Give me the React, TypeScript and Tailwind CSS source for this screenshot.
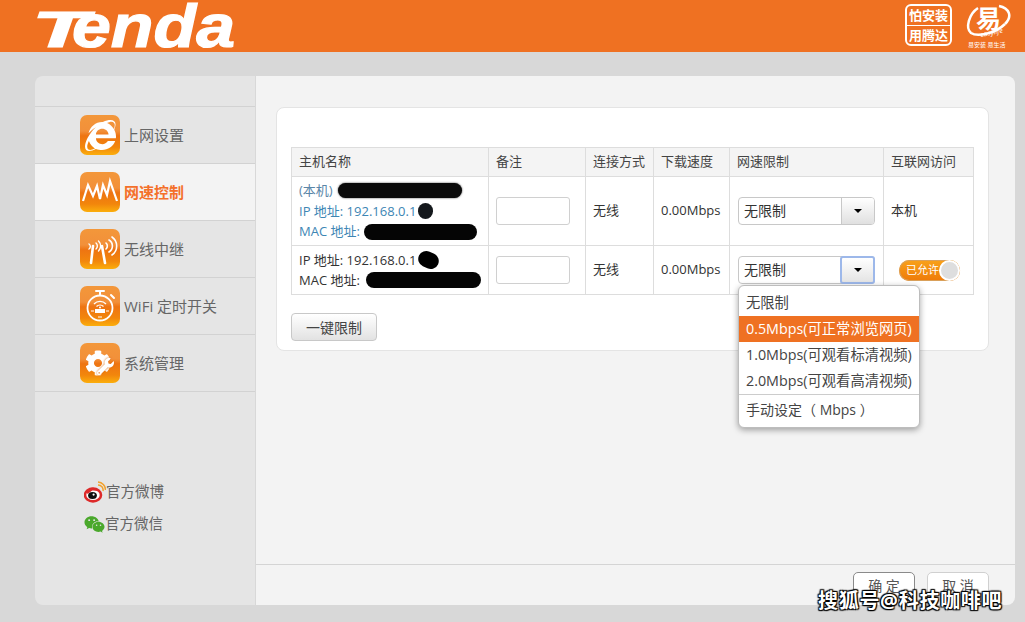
import type { ReactNode } from "react";
import { FaInternetExplorer, FaCog, FaWrench, FaWeixin } from "react-icons/fa";

const font = { fontFamily: '"Open Sans", "Noto Sans CJK SC", sans-serif' };

const tile =
  "relative flex h-10 w-10 shrink-0 items-center justify-center overflow-hidden rounded-[7px] bg-[linear-gradient(180deg,#f3973a_0%,#f2903a_40%,#ee7412_52%,#f2860c_80%,#fbae0c_100%)] text-white";

const SpeedIcon = () => (
  <svg viewBox="0 0 40 40" className="h-10 w-10" fill="none" stroke="#fff" strokeWidth="2.2" strokeLinejoin="miter">
    <path d="M3 29 L8 13 L13 24 L17 14 L20 27 L23 13 L27 23 L30 9 L37 29" />
  </svg>
);

const RepeaterIcon = () => (
  <svg viewBox="0 0 40 40" className="h-10 w-10" fill="none" stroke="#fff" strokeLinecap="round">
    <path d="M11 34 L13 17" strokeWidth="2.6" />
    <path d="M25 34 L22 17" strokeWidth="2.6" />
    <path d="M9 15 A3 3 0 0 1 9 20 M16 14 A4 4 0 0 1 16 20 M18.5 12 A7 7 0 0 1 18.5 22" strokeWidth="1.4" />
    <path d="M26 14 A4 4 0 0 1 26 20 M29 11 A7 7 0 0 1 29 23 M32 8 A11 11 0 0 1 32 26" strokeWidth="1.6" />
  </svg>
);

const TimerIcon = () => (
  <svg viewBox="0 0 40 40" className="h-10 w-10" fill="none" stroke="#fff">
    <circle cx="20" cy="22" r="12.5" strokeWidth="1.8" />
    <path d="M16 5 H24 M20 5 V9 M31 9 L34 12" strokeWidth="2" strokeLinecap="round" />
    <path d="M14 18 A8 8 0 0 1 26 18 M16.5 20.5 A5 5 0 0 1 23.5 20.5" strokeWidth="1.3" />
    <rect x="15" y="23" width="10" height="4" fill="#fff" stroke="none" />
    <circle cx="20" cy="21.5" r="1" fill="#fff" stroke="none" />
    <path d="M11 25 H14 M26 25 H29 M18 31 H22" strokeWidth="1" />
  </svg>
);

const WeiboIcon = () => (
  <svg viewBox="0 0 22 22" className="h-[22px] w-[22px]" fill="none">
    <ellipse cx="9" cy="14" rx="8" ry="6.4" fill="#fff" stroke="#dd2a2a" strokeWidth="2.6" />
    <path d="M13 8.5 L8 8 L3 12" stroke="#dd2a2a" strokeWidth="2.4" />
    <ellipse cx="8.5" cy="14.5" rx="4.4" ry="3.6" fill="#111" />
    <circle cx="9.6" cy="13.6" r="1.1" fill="#fff" />
    <path d="M14 4 A5 5 0 0 1 19 10 M14 1 A8 8 0 0 1 21.5 9" stroke="#f2a12b" strokeWidth="1.5" />
  </svg>
);

const menu: { label: string; icon: ReactNode; active?: boolean }[] = [
  { label: "上网设置", icon: <FaInternetExplorer className="h-[31px] w-[31px]" /> },
  { label: "网速控制", icon: <SpeedIcon />, active: true },
  { label: "无线中继", icon: <RepeaterIcon /> },
  { label: "WiFi 定时开关", icon: <TimerIcon /> },
  {
    label: "系统管理",
    icon: (
      <span className="relative block h-10 w-10">
        <FaCog className="absolute left-[5px] top-[7px] h-[26px] w-[26px]" />
        <FaWrench className="absolute left-[17px] top-[15px] h-[17px] w-[17px] drop-shadow-[0_0_1px_#d9690c]" />
      </span>
    ),
  },
];

const Caret = () => <span className="h-0 w-0 border-x-[4px] border-t-[4px] border-x-transparent border-t-black" />;

const SpeedSelect = ({ focused }: { focused?: boolean }) => (
  <div className="ml-px flex h-7 w-[137px] rounded-[4px] border border-[#c8c8c8] bg-white text-[14px]">
    <span className="flex-1 pl-[5px] leading-[26px] text-[#333]">无限制</span>
    <span
      className={
        focused
          ? "-m-px flex w-[35px] items-center justify-center rounded-[3px] border-2 border-[#9db8ea] bg-[linear-gradient(180deg,#ffffff,#e4e4e4)]"
          : "flex w-[33px] items-center justify-center rounded-r-[3px] border-l border-[#c8c8c8] bg-[linear-gradient(180deg,#ffffff,#e0e0e0)]"
      }
    >
      <Caret />
    </span>
  </div>
);

const RemarkInput = () => <input className="block h-7 w-[74px] rounded-[3px] border border-[#d0d0d0] bg-white" />;

const th = "border border-[#dddddd] pl-[7px] text-left text-[13px] font-normal text-[#444]";
const td = "border border-[#dddddd] pl-[7px] text-[13px] text-[#333]";

const dropdownItem = "flex h-[26px] items-center pl-[7px] text-[14.3px] text-[#444]";

const App = () => (
  <div style={font} className="flex h-[622px] w-[1025px] flex-col overflow-hidden bg-[#d8d8d8]">
    {/* header */}
    <header className="flex h-[52px] shrink-0 items-start justify-between bg-[#ef7122]">
      <svg viewBox="0 0 240 52" className="ml-[30px] h-[52px] w-[240px]">
        <text
          x="2"
          y="47"
          fontFamily='"Liberation Sans", sans-serif'
          fontWeight="700"
          fontStyle="italic"
          fontSize="50"
          fill="#fff"
          stroke="#fff"
          strokeWidth="1.2"
          textLength="56"
          lengthAdjust="spacingAndGlyphs"
        >
          T
        </text>
        <text
          x="42"
          y="47"
          fontFamily='"Liberation Sans", sans-serif'
          fontWeight="700"
          fontStyle="italic"
          fontSize="61"
          fill="#fff"
          stroke="#fff"
          strokeWidth="1.2"
          textLength="163"
          lengthAdjust="spacingAndGlyphs"
        >
          enda
        </text>
      </svg>
      <div className="mr-[13px] mt-1 flex items-start gap-[13px]">
        <div className="flex h-[42px] w-[47px] flex-col items-center rounded-[6px] border-2 border-white text-[13px] font-bold leading-[19px] text-white">
          <span>怕安装</span>
          <span className="w-full border-t border-white text-center">用腾达</span>
        </div>
        <div className="relative h-[44px] w-[47px] text-white">
          <svg viewBox="0 0 47 34" className="absolute left-0 top-0 h-[34px] w-[47px]" fill="none" stroke="#fff" strokeWidth="2.5">
            <path d="M13 4 C4 10 0 24 6 29 C12 33 30 30 40 20" />
            <path d="M34 2 C44 4 48 12 40 20" />
          </svg>
          <span className="absolute left-[11px] top-[1px] text-[25px] font-bold leading-[26px]">易</span>
          <span className="absolute left-[15px] top-[25px] -rotate-12 text-[7px] italic leading-[8px]">easylife</span>
          <span className="absolute left-[3px] top-[37px] whitespace-nowrap text-[6px] leading-[8px]">易安装 易生活</span>
        </div>
      </div>
    </header>

    <div className="flex min-h-0 flex-1 pb-[17px] pl-[35px] pr-[10px] pt-6">
      {/* sidebar */}
      <aside className="flex w-[220px] shrink-0 flex-col rounded-l-[8px] bg-[#e5e5e5]">
        <div className="h-[31px] border-b border-[#d2d2d2]" />
        {menu.map((m) => (
          <div
            key={m.label}
            className={`flex h-[57px] items-center gap-1 border-b border-[#d2d2d2] pl-[45px] text-[15px] ${
              m.active ? "bg-[#f3f3f3] font-bold text-[#f4702a]" : "text-[#666]"
            }`}
          >
            <span className={tile}>{m.icon}</span>
            {m.label}
          </div>
        ))}
        <div className="mt-[89px] flex flex-col gap-[10px] pl-[49px] text-[14.5px] text-[#666]">
          <div className="flex h-[22px] items-center">
            <WeiboIcon />
            官方微博
          </div>
          <div className="flex h-[22px] items-center">
            <FaWeixin className="h-[21px] w-[21px] text-[#4aa82c]" />
            官方微信
          </div>
        </div>
      </aside>

      {/* content */}
      <main className="ml-px flex min-w-0 flex-1 flex-col rounded-r-[8px] bg-[#f3f3f3]">
        <div className="flex-1 pl-5 pr-[26px] pt-[31px]">
          <section className="rounded-[8px] border border-[#e4e4e4] bg-white pb-[9px] pl-[14px] pr-[14px] pt-[39px]">
            <table className="w-[682px] table-fixed border-collapse bg-white">
              <colgroup>
                <col className="w-[197px]" />
                <col className="w-[97px]" />
                <col className="w-[68px]" />
                <col className="w-[76px]" />
                <col className="w-[154px]" />
                <col className="w-[90px]" />
              </colgroup>
              <thead>
                <tr className="h-[29px] bg-[#f4f4f4]">
                  <th className={th}>主机名称</th>
                  <th className={th}>备注</th>
                  <th className={th}>连接方式</th>
                  <th className={th}>下载速度</th>
                  <th className={th}>网速限制</th>
                  <th className={th}>互联网访问</th>
                </tr>
              </thead>
              <tbody>
                <tr className="h-[69px]">
                  <td className={td}>
                    <div className="leading-[20.5px] text-[#3d86b4]">
                      <div className="flex items-center whitespace-nowrap">
                        <span className="text-[#5a86a8]">(本机)</span>
                        <span className="ml-[5px] h-[15px] w-[124px] rounded-full bg-[#0a0a0a] shadow-[0_0_2px_#333]" />
                      </div>
                      <div className="flex items-center whitespace-nowrap">
                        IP 地址: 192.168.0.1
                        <span className="ml-[2px] h-4 w-[15px] rounded-full bg-[#14181c]" />
                      </div>
                      <div className="flex items-center whitespace-nowrap">
                        MAC 地址:
                        <span className="ml-[4px] h-4 w-[113px] rounded-full bg-[#050505]" />
                      </div>
                    </div>
                  </td>
                  <td className={td}>
                    <RemarkInput />
                  </td>
                  <td className={td}>无线</td>
                  <td className={td}>0.00Mbps</td>
                  <td className={td}>
                    <SpeedSelect />
                  </td>
                  <td className={td}>本机</td>
                </tr>
                <tr className="h-[49px]">
                  <td className={`${td} leading-5`}>
                    <div className="flex items-center whitespace-nowrap">
                      IP 地址: 192.168.0.1
                      <span className="ml-[2px] h-[16px] w-[21px] rotate-[25deg] rounded-full bg-black" />
                    </div>
                    <div className="flex items-center whitespace-nowrap">
                      MAC 地址:
                      <span className="ml-[6px] h-4 w-[115px] rounded-full bg-[#050505]" />
                    </div>
                  </td>
                  <td className={td}>
                    <RemarkInput />
                  </td>
                  <td className={td}>无线</td>
                  <td className={td}>0.00Mbps</td>
                  <td className={td}>
                    <div className="relative">
                      <SpeedSelect focused />
                      {/* open dropdown */}
                      <div className="absolute left-px top-[29px] z-10 w-[182px] rounded-[6px] border border-[#bdbdbd] bg-white pb-1 pt-1 shadow-[0_2px_6px_rgba(0,0,0,0.35)]">
                        <div className={dropdownItem}>无限制</div>
                        <div className="flex h-[26px] items-center bg-[#ef7122] pl-[7px] text-[14.3px] text-white">0.5Mbps(可正常浏览网页)</div>
                        <div className={dropdownItem}>1.0Mbps(可观看标清视频)</div>
                        <div className={dropdownItem}>2.0Mbps(可观看高清视频)</div>
                        <div className="flex h-[29px] items-center border-t border-[#cccccc] pl-[7px] text-[14px] text-[#444]">手动设定（ Mbps ）</div>
                      </div>
                    </div>
                  </td>
                  <td className={td}>
                    <div className="ml-[8px] flex h-[21px] w-[61px] items-center justify-between rounded-full bg-[linear-gradient(180deg,#f9a21a,#ee7a08)] pl-[7px] text-[11px] text-white shadow-[inset_0_0_0_1px_#d9a05a]">
                      已允许
                      <span className="h-[21px] w-[21px] rounded-full border-2 border-white bg-[#dedede]" />
                    </div>
                  </td>
                </tr>
              </tbody>
            </table>
            <button className="mt-[18px] block h-7 w-[86px] rounded-[4px] border border-[#c8c8c8] bg-[linear-gradient(180deg,#ffffff,#e2e2e2)] text-[14px] text-[#444]">
              一键限制
            </button>
          </section>
        </div>
        <footer className="flex h-[41px] shrink-0 justify-end gap-3 overflow-hidden border-t border-[#d4d4d4] pr-[26px] pt-[7px]">
          <button className="h-[40px] w-[62px] rounded-[5px] border border-[#8a8a8a] bg-white pb-[13px] text-[14px] text-[#555]">确 定</button>
          <button className="h-[40px] w-[62px] rounded-[5px] border border-[#d0d0d0] bg-white pb-[13px] text-[14px] text-[#555]">取 消</button>
        </footer>
      </main>
    </div>

    {/* watermark */}
    <span className="absolute left-[818px] top-[587px] z-20 text-[20px] font-bold leading-[28px] tracking-[0.7px] text-white [text-shadow:0_0_2px_#000,1px_1px_1px_#000,-1px_-1px_1px_#000,1px_-1px_1px_#000,-1px_1px_1px_#000]">
      搜狐号@科技咖啡吧
    </span>
  </div>
);

export default App;
